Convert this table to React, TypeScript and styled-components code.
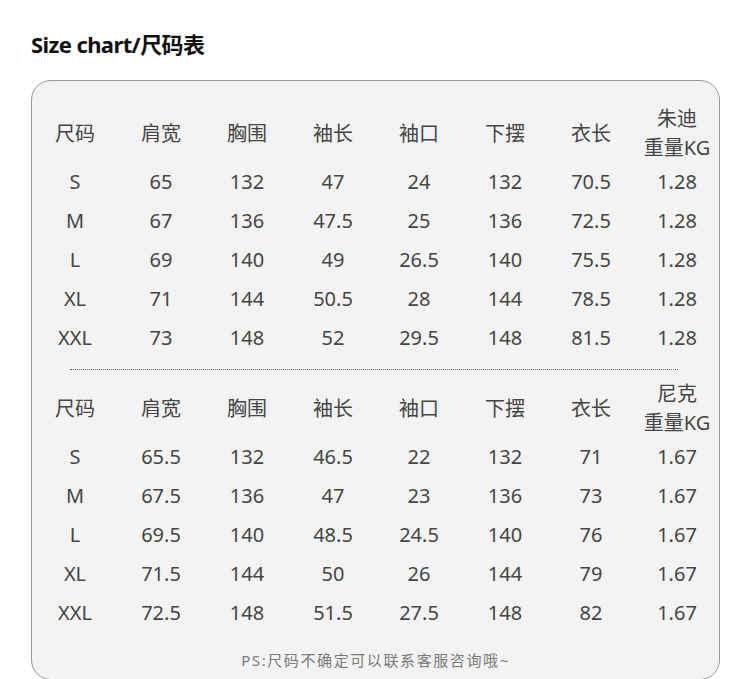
import styled, { createGlobalStyle } from 'styled-components'

const GlobalStyle = createGlobalStyle`
    body {
        margin: 0;
        background: #fff;
        font-family: "Noto Sans", "Noto Sans CJK SC", sans-serif;
    }
`

const Page = styled.div`
    width: 750px;
    height: 679px;
    padding: 26px 0 0 31px;
    box-sizing: border-box;
    overflow: hidden;
`

const Title = styled.h1`
    margin: 0 0 17px 0;
    height: 37px;
    font-size: 22px;
    line-height: 37px;
    font-weight: 700;
    color: #111;
    letter-spacing: -0.6px;
`

const Card = styled.div`
    width: 689px;
    height: 600px;
    box-sizing: border-box;
    border: 1px solid #9a9a9a;
    border-radius: 20px;
    background: #f3f3f3;
    padding-top: 23px;
    display: flex;
    flex-direction: column;
`

const Table = styled.div`
    display: grid;
    grid-template-columns: repeat(8, 86px);
    color: #454545;
    font-size: 20px;
`

const HeadCell = styled.div`
    height: 58px;
    display: flex;
    align-items: center;
    justify-content: center;
    text-align: center;
    line-height: 29px;
`

const Cell = styled.div`
    height: 39px;
    line-height: 39px;
    text-align: center;
`

const Divider = styled.div`
    margin: 12px 41px 9px 38px;
    border-top: 1px dotted #666;
`

const Note = styled.div`
    margin-top: 17px;
    text-align: center;
    font-size: 15px;
    color: #7a7a7a;
    letter-spacing: 1.6px;
`

type Chart = {
    brand: string
    rows: string[][]
}

const heads = ['尺码', '肩宽', '胸围', '袖长', '袖口', '下摆', '衣长']

const charts: Chart[] = [
    {
        brand: '朱迪',
        rows: [
            ['S', '65', '132', '47', '24', '132', '70.5', '1.28'],
            ['M', '67', '136', '47.5', '25', '136', '72.5', '1.28'],
            ['L', '69', '140', '49', '26.5', '140', '75.5', '1.28'],
            ['XL', '71', '144', '50.5', '28', '144', '78.5', '1.28'],
            ['XXL', '73', '148', '52', '29.5', '148', '81.5', '1.28'],
        ],
    },
    {
        brand: '尼克',
        rows: [
            ['S', '65.5', '132', '46.5', '22', '132', '71', '1.67'],
            ['M', '67.5', '136', '47', '23', '136', '73', '1.67'],
            ['L', '69.5', '140', '48.5', '24.5', '140', '76', '1.67'],
            ['XL', '71.5', '144', '50', '26', '144', '79', '1.67'],
            ['XXL', '72.5', '148', '51.5', '27.5', '148', '82', '1.67'],
        ],
    },
]

function SizeTable({ chart }: { chart: Chart }) {
    return (
        <Table>
            {heads.map(h => <HeadCell key={h}>{h}</HeadCell>)}
            <HeadCell>{chart.brand}<br />重量KG</HeadCell>
            {chart.rows.map(row =>
                row.map((v, i) => <Cell key={row[0] + i}>{v}</Cell>)
            )}
        </Table>
    )
}

export default function App() {
    return (
        <>
            <GlobalStyle />
            <Page>
                <Title>Size chart/尺码表</Title>
                <Card>
                    <SizeTable chart={charts[0]} />
                    <Divider />
                    <SizeTable chart={charts[1]} />
                    <Note>PS:尺码不确定可以联系客服咨询哦~</Note>
                </Card>
            </Page>
        </>
    )
}
